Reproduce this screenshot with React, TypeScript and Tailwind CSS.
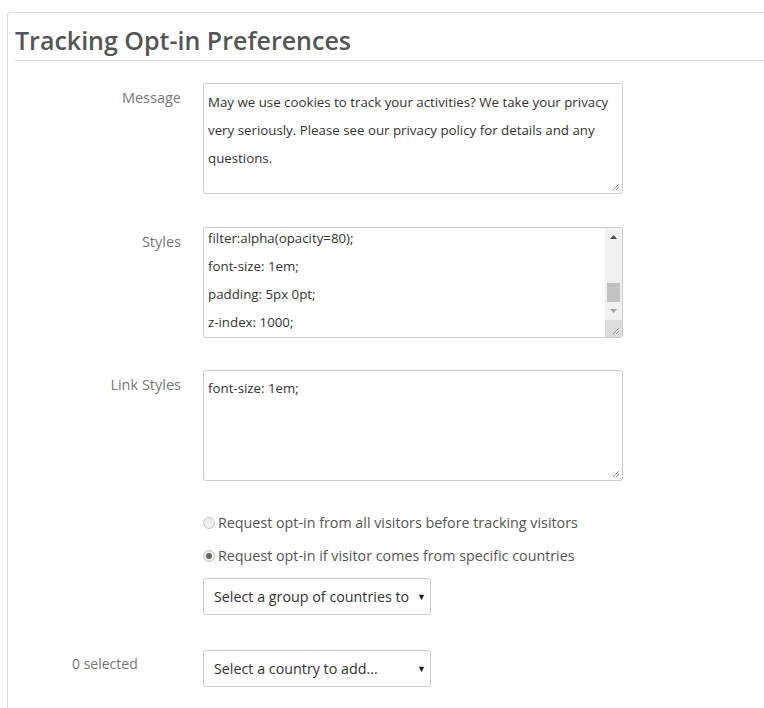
import React from 'react'

const font = { fontFamily: '"Open Sans", "Noto Sans", Arial, sans-serif' }

function Label({ children }: { children: React.ReactNode }) {
  return (
    <div className="w-[173px] shrink-0 pt-[6px] text-right text-[14.5px] leading-[18px] text-[#777]">
      {children}
    </div>
  )
}

function ResizeGrip() {
  return (
    <svg className="absolute bottom-[2px] right-[2px]" width="8" height="8" viewBox="0 0 8 8">
      <path d="M7 1 L1 7 M7 4 L4 7" stroke="#999" strokeWidth="1" />
    </svg>
  )
}

function Box({ lines, top = 4 }: { lines: string[]; top?: number }) {
  return (
    <div className="relative h-[111px] w-[420px] overflow-hidden rounded-[3px] border border-[#ccc] bg-white">
      <div className="pl-[4px] text-[13.3px] leading-[28px] text-[#333]" style={{ paddingTop: top }}>
        {lines.map((l) => (
          <div key={l}>{l}</div>
        ))}
      </div>
      <ResizeGrip />
    </div>
  )
}

function ScrollBox() {
  return (
    <div className="relative flex h-[111px] w-[420px] overflow-hidden rounded-[3px] border border-[#ccc] bg-white">
      <div className="flex-1 pl-[4px] text-[13.3px] leading-[28px] text-[#333]">
        <div className="-mt-[4px]">filter:alpha(opacity=80);</div>
        <div>font-size: 1em;</div>
        <div>padding: 5px 0pt;</div>
        <div>z-index: 1000;</div>
      </div>
      <div className="flex w-[17px] flex-col bg-[#f1f1f1]">
        <div className="flex h-[17px] items-center justify-center">
          <svg width="7" height="4" viewBox="0 0 7 4"><path d="M0 4 L3.5 0 L7 4 Z" fill="#505050" /></svg>
        </div>
        <div className="h-[38px]" />
        <div className="mx-[2px] h-[19px] bg-[#c1c1c1]" />
        <div className="flex h-[17px] items-center justify-center">
          <svg width="7" height="4" viewBox="0 0 7 4"><path d="M0 0 L3.5 4 L7 0 Z" fill="#a3a3a3" /></svg>
        </div>
        <div className="mt-auto h-[17px] bg-[#dcdcdc]" />
      </div>
      <ResizeGrip />
    </div>
  )
}

function Select({ text }: { text: string }) {
  return (
    <div className="flex h-[37px] w-[228px] items-center overflow-hidden rounded-[3px] border border-[#ccc] bg-white pl-[10px] text-[14.3px] text-[#333]">
      <span className="w-[195px] shrink-0 overflow-hidden whitespace-nowrap">{text}</span>
      <span className="ml-[8px] text-[9px] text-[#222]">▼</span>
    </div>
  )
}

function Radio({ checked, label }: { checked?: boolean; label: string }) {
  return (
    <div className="flex items-center gap-[3px] text-[14.3px] leading-[20px] text-[#555]">
      <span className="flex h-[12px] w-[12px] items-center justify-center rounded-full border border-[#c4c4c4] bg-[#ededed]">
        {checked && <span className="h-[6px] w-[6px] rounded-full bg-[#666]" />}
      </span>
      <span>{label}</span>
    </div>
  )
}

export default function App() {
  return (
    <div className="min-h-[708px] bg-white pt-[12px] pl-[7px]" style={font}>
      <div className="min-h-[696px] rounded-tl-[4px] border-l border-t border-[#ddd] pl-[7px]">
        <h2 className="border-b border-[#ddd] pb-[5px] pt-[12px] text-[25px] font-semibold leading-[30px] text-[#555]">
          Tracking Opt-in Preferences
        </h2>
        <div className="-ml-[7px] flex flex-col pt-[22px]">
          <div className="flex gap-[22px]">
            <Label>Message</Label>
            <Box
              lines={[
                'May we use cookies to track your activities? We take your privacy',
                'very seriously. Please see our privacy policy for details and any',
                'questions.',
              ]}
            />
          </div>
          <div className="mt-[33px] flex gap-[22px]">
            <Label>Styles</Label>
            <ScrollBox />
          </div>
          <div className="mt-[32px] flex gap-[22px]">
            <Label>Link Styles</Label>
            <Box lines={['font-size: 1em;']} top={3} />
          </div>
          <div className="mt-[32px] flex flex-col gap-[13px] pl-[195px]">
            <Radio label="Request opt-in from all visitors before tracking visitors" />
            <Radio checked label="Request opt-in if visitor comes from specific countries" />
          </div>
          <div className="mt-[12px] pl-[195px]">
            <Select text="Select a group of countries to add..." />
          </div>
          <div className="mt-[35px] flex items-start gap-[22px]">
            <div className="w-[173px] shrink-0 pl-[64px] pt-[5px] text-[14px] leading-[18px] text-[#777]">
              0 selected
            </div>
            <Select text="Select a country to add..." />
          </div>
        </div>
      </div>
    </div>
  )
}
